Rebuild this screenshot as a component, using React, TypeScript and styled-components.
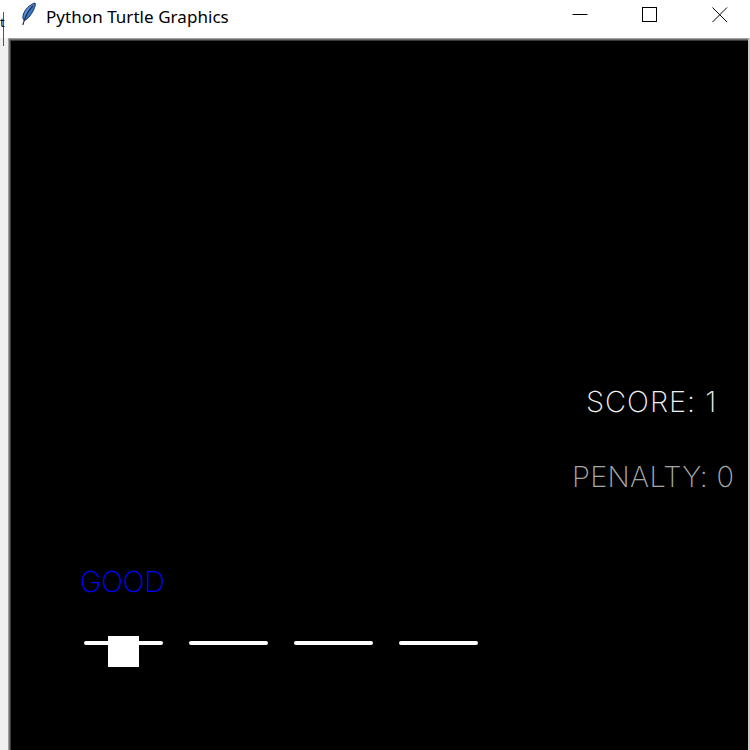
import React from "react";
import styled, { createGlobalStyle } from "styled-components";

const Global = createGlobalStyle`
  html, body { margin: 0; padding: 0; background: #ffffff; }
  #root { width: 750px; height: 750px; overflow: hidden; }
`;

const Window = styled.div`
  position: relative;
  width: 750px;
  height: 750px;
  display: flex;
  flex-direction: column;
  background: #f0f0f0;
  overflow: hidden;
`;

const TitleBar = styled.div`
  height: 38px;
  flex: 0 0 38px;
  display: flex;
  align-items: flex-start;
  background: #ffffff;
  font-family: "Noto Sans", "Open Sans", sans-serif;
  font-size: 17px;
  color: #000;
`;

const AppIcon = styled.svg`
  width: 18px;
  height: 24px;
  margin: 2px 0 0 19px;
  flex: 0 0 auto;
`;

const Title = styled.div`
  margin: 5px 0 0 9px;
  line-height: 24px;
  letter-spacing: 0.05px;
`;

const Spacer = styled.div`
  flex: 1;
`;

const Controls = styled.div`
  display: flex;
  margin-right: -5px;
`;

const CtrlButton = styled.div`
  width: 70px;
  height: 30px;
  display: flex;
  align-items: center;
  justify-content: center;
`;

const Body = styled.div`
  flex: 1;
  display: flex;
  padding-left: 8px;
`;

const Canvas = styled.div`
  position: relative;
  flex: 1;
  background: #000;
  border-top: 1px solid #a0a0a0;
  border-left: 1px solid #a0a0a0;
  border-right: 2px solid #c8c8c8;
  box-shadow: inset 1px 1px 0 #6e6e6e, inset 2px 2px 0 #3c3c3c;
  overflow: hidden;
`;

const Label = styled.div<{ $x: number; $y: number; $color: string; $spacing: number }>`
  position: absolute;
  left: ${(p) => p.$x}px;
  top: ${(p) => p.$y}px;
  color: ${(p) => p.$color};
  font-family: Inter, "Noto Sans", sans-serif;
  font-weight: 200;
  font-size: 29px;
  line-height: 30px;
  white-space: nowrap;
  letter-spacing: ${(p) => p.$spacing}px;
`;

const Lanes = styled.div`
  position: absolute;
  left: 75px;
  top: 602px;
  display: flex;
  gap: 26px;
`;

const Lane = styled.div`
  width: 79px;
  height: 4px;
  border-radius: 2px;
  background: #ffffff;
`;

const Player = styled.div`
  position: absolute;
  left: 99px;
  top: 597px;
  width: 31px;
  height: 31px;
  background: #ffffff;
`;

const BehindSliver = styled.div`
  position: absolute;
  left: 3px;
  top: 12px;
  width: 1px;
  height: 34px;
  background: #555;
`;

const BehindGlyph = styled.div`
  position: absolute;
  left: 0px;
  top: 14px;
  font-family: "Noto Sans", sans-serif;
  font-size: 13px;
  line-height: 16px;
  color: #000;
`;

export default function App() {
  return (
    <>
      <Global />
      <Window>
        <BehindSliver />
        <BehindGlyph>t</BehindGlyph>
        <TitleBar>
          <AppIcon viewBox="0 0 18 24">
            <defs>
              <linearGradient id="fg" x1="0" y1="0" x2="1" y2="1">
                <stop offset="0" stopColor="#9cc8f5" />
                <stop offset="0.5" stopColor="#3f7fd0" />
                <stop offset="1" stopColor="#1d3f7a" />
              </linearGradient>
            </defs>
            <path
              d="M16 1 C 11 2.5, 5.8 7, 4.2 13 C 3.6 15.5, 4 17.5, 5.2 18.6 C 9.8 16.5, 13.5 11, 15.6 5.5 C 16.3 3.8, 16.5 2.2, 16 1 Z"
              fill="url(#fg)"
              stroke="#1b2f55"
              strokeWidth="1"
            />
            <path d="M13.8 4 C 10 8, 7.2 12.5, 5.2 18.6 L 3.8 23" stroke="#1b2f55" strokeWidth="1.2" fill="none" />
          </AppIcon>
          <Title>Python Turtle Graphics</Title>
          <Spacer />
          <Controls>
            <CtrlButton>
              <svg width="16" height="16" viewBox="0 0 16 16">
                <line x1="0.5" y1="7.5" x2="15.5" y2="7.5" stroke="#000" strokeWidth="1" />
              </svg>
            </CtrlButton>
            <CtrlButton>
              <svg width="16" height="16" viewBox="0 0 16 16">
                <rect x="0.5" y="0.5" width="14" height="14" fill="none" stroke="#000" strokeWidth="1" />
              </svg>
            </CtrlButton>
            <CtrlButton>
              <svg width="16" height="16" viewBox="0 0 16 16">
                <line x1="0.5" y1="0.5" x2="15" y2="15" stroke="#000" strokeWidth="1" />
                <line x1="15" y1="0.5" x2="0.5" y2="15" stroke="#000" strokeWidth="1" />
              </svg>
            </CtrlButton>
          </Controls>
        </TitleBar>
        <Body>
          <Canvas>
            <Label $x={577} $y={348} $color="#f2f2f2" $spacing={1}>SCORE: 1</Label>
            <Label $x={563} $y={423} $color="#a8a8a8" $spacing={0.3}>PENALTY: 0</Label>
            <Label $x={71} $y={528} $color="#0000ff" $spacing={-0.3}>GOOD</Label>
            <Lanes>
              <Lane />
              <Lane />
              <Lane />
              <Lane />
            </Lanes>
            <Player />
          </Canvas>
        </Body>
      </Window>
    </>
  );
}
